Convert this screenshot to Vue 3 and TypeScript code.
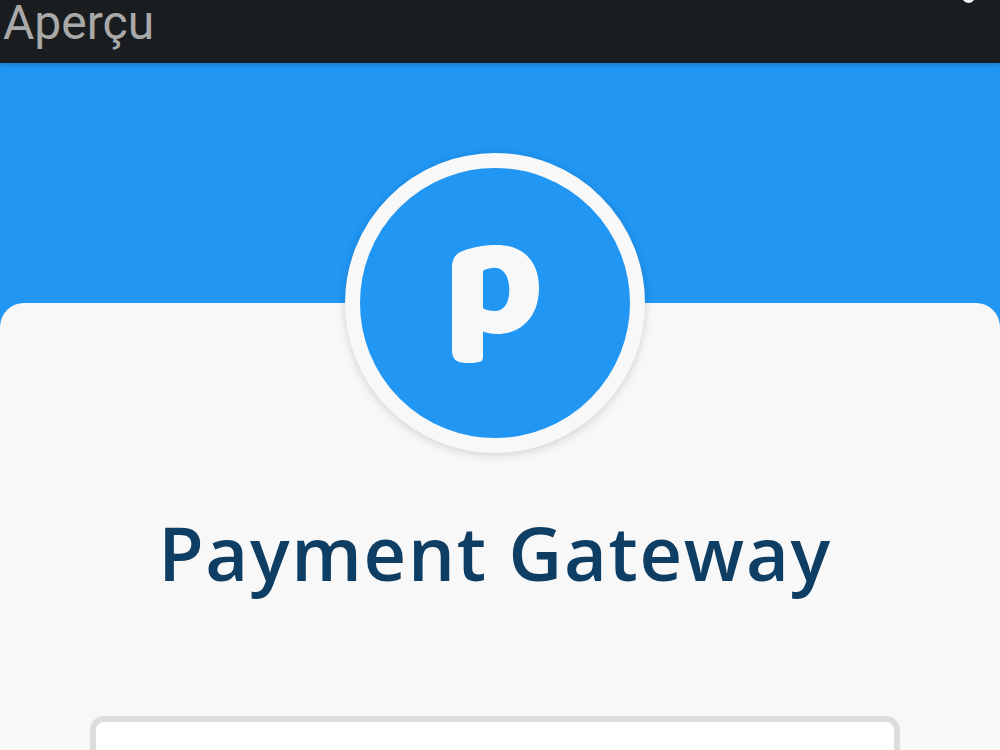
<script setup lang="ts">
const title = 'Payment Gateway'
</script>

<template>
  <div class="page">
    <header class="toolbar">
      <span class="toolbar-title">Aperçu</span>
      <span class="toolbar-dot" />
    </header>
    <div class="hero" />
    <main class="sheet">
      <div class="logo">
        <svg width="90" height="120" viewBox="-1 -1 90 120">
          <path
            fill="#f8f8f8"
            fill-rule="evenodd"
            d="M1 24C1 14 5 9 13 6.5C22 3 34 1 46 1C72 1 88 17 88 44C88 72 71 90 46 90C40 90 36 89 32 87.5L32 112C32 116 31 117.5 28 118C24 119 20 119 16 119C5 119 1 115 1 106ZM32 26.7C36 24.5 40 23.7 44 23.7C53 23.7 58.3 33 58.3 46C58.3 59 53 67 44 67C39 67 35 66 32 64.3Z"
          />
        </svg>
      </div>
      <h1 class="title">{{ title }}</h1>
      <div class="field" />
    </main>
  </div>
</template>

<style scoped>
.page {
  height: 750px;
  overflow: hidden;
  display: flex;
  flex-direction: column;
  background: #2196f3;
}

.toolbar {
  position: relative;
  z-index: 2;
  flex: none;
  height: 63px;
  display: flex;
  justify-content: space-between;
  align-items: flex-start;
  padding: 0 25px 0 3px;
  background: #191d20;
  box-shadow: 0 2px 4px rgba(0, 0, 0, 0.18);
}

.toolbar-title {
  font-family: Roboto, sans-serif;
  font-size: 48px;
  line-height: 46px;
  color: #a9a9a9;
}

.toolbar-dot {
  width: 13px;
  height: 13px;
  margin-top: -10px;
  border-radius: 50%;
  background: #f4f4f4;
}

.hero {
  flex: none;
  height: 240px;
}

.sheet {
  flex: 1;
  display: flex;
  flex-direction: column;
  align-items: center;
  padding-right: 10px;
  background: #f8f8f8;
  border-radius: 24px 24px 0 0;
}

.logo {
  flex: none;
  box-sizing: border-box;
  width: 300px;
  height: 300px;
  margin-top: -150px;
  display: flex;
  align-items: center;
  justify-content: center;
  border: 15px solid #f8f8f8;
  border-radius: 50%;
  background: #2196f3;
  box-shadow: 0 2px 10px rgba(0, 0, 0, 0.16);
}

.title {
  margin: 55px 0 0;
  font-family: "Open Sans", sans-serif;
  font-size: 74px;
  font-weight: 600;
  line-height: 90px;
  letter-spacing: 1.7px;
  color: #0e3e64;
  white-space: nowrap;
}

.field {
  flex: none;
  box-sizing: border-box;
  width: 810px;
  height: 120px;
  margin-top: 118px;
  background: #fff;
  border: 6px solid #ddd;
  border-radius: 14px;
}
</style>
